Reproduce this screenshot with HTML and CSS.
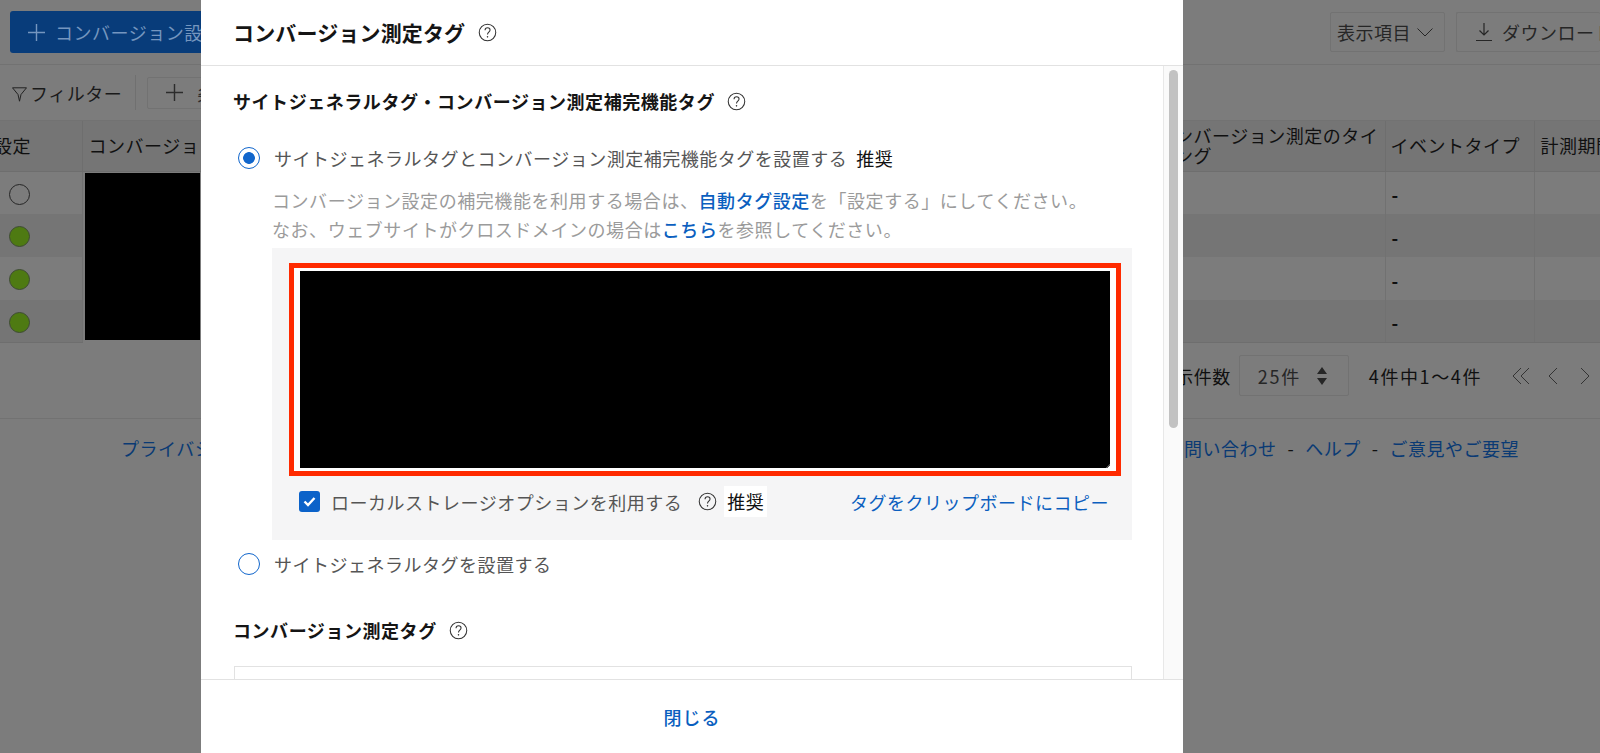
FILE: index.html
```html
<!DOCTYPE html>
<html lang="ja">
<head>
<meta charset="utf-8">
<title>コンバージョン測定タグ</title>
<link rel="stylesheet" href="styles.css">
</head>
<body>
<svg class="sprites" width="0" height="0" aria-hidden="true">
  <symbol id="help" viewBox="0 0 20 20">
    <circle cx="10" cy="10" r="8.7" fill="none" stroke="currentColor" stroke-width="1.1"/>
    <path d="M7.4 7.6c0-1.6 1.2-2.6 2.7-2.6s2.6 1 2.6 2.3c0 2.3-2.7 2.3-2.7 4.7" fill="none" stroke="currentColor" stroke-width="1.1"/>
    <circle cx="10" cy="14.6" r=".8" fill="currentColor"/>
  </symbol>
  <symbol id="plus" viewBox="0 0 18 18">
    <path d="M9 0v18M0 9h18" fill="none" stroke="currentColor" stroke-width="1.5"/>
  </symbol>
</svg>

<div class="page">
  <header class="toolbar">
    <button class="btn-primary"><svg class="ico-plus"><use href="#plus"/></svg>コンバージョン設定</button>
    <div class="toolbar-right">
      <button class="btn-plain">表示項目<svg class="ico-chev" viewBox="0 0 16 9"><path d="M.5.5 8 8 15.5.5" fill="none" stroke="currentColor"/></svg></button>
      <button class="btn-plain btn-download"><svg class="ico-dl" viewBox="0 0 16 20"><path d="M8 1v12M3.5 8.5 8 13l4.500-4.500M0 18.500h16" fill="none" stroke="currentColor" stroke-width="1.200"/></svg>ダウンロード</button>
    </div>
  </header>

  <div class="filterbar">
    <svg class="ico-filter" viewBox="0 0 15 15"><path d="M.5.8h14L9 7.500l-1.500 6.700L6 7.500z" fill="none" stroke="currentColor"/></svg>
    <span class="filter-label">フィルター</span>
    <span class="vsep"></span>
    <button class="btn-add"><svg class="ico-plus"><use href="#plus"/></svg>条件</button>
  </div>

  <table class="grid">
    <colgroup><col class="c1"><col class="c2"><col class="c3"><col class="c4"><col class="c5"><col class="c6"></colgroup>
    <thead>
      <tr>
        <th class="th-clip">設定</th>
        <th>コンバージョン</th>
        <th></th>
        <th>コンバージョン測定のタイミング</th>
        <th>イベントタイプ</th>
        <th>計測期間</th>
      </tr>
    </thead>
    <tbody>
      <tr>
        <td><span class="dot dot-off"></span></td>
        <td class="redact-cell" rowspan="4"><div class="redact"></div></td>
        <td></td><td></td><td class="dash">-</td><td></td>
      </tr>
      <tr class="alt"><td><span class="dot"></span></td><td></td><td></td><td class="dash">-</td><td></td></tr>
      <tr><td><span class="dot"></span></td><td></td><td></td><td class="dash">-</td><td></td></tr>
      <tr class="alt"><td><span class="dot"></span></td><td></td><td></td><td class="dash">-</td><td></td></tr>
    </tbody>
  </table>

  <div class="pager">
    <span>表示件数</span>
    <div class="select"><span class="select-val">25件</span><svg class="ico-sort" viewBox="0 0 12 20"><path d="M6 1l5 7H1zM6 19l5-7H1z" fill="currentColor"/></svg></div>
    <span class="count">4件中1〜4件</span>
    <div class="pager-nav">
      <svg viewBox="0 0 18 18"><path d="M9 1 1 9l8 8M17 1 9 9l8 8" fill="none" stroke="currentColor"/></svg>
      <svg viewBox="0 0 18 18"><path d="M13 1 5 9l8 8" fill="none" stroke="currentColor"/></svg>
      <svg viewBox="0 0 18 18"><path d="M5 1l8 8-8 8" fill="none" stroke="currentColor"/></svg>
    </div>
  </div>

  <footer class="foot">
    <a>プライバシー</a>
    <div class="foot-right"><a>問い合わせ</a><span>-</span><a>ヘルプ</a><span>-</span><a>ご意見やご要望</a></div>
  </footer>
</div>

<section class="modal">
  <div class="modal-head">
    <h1>コンバージョン測定タグ</h1>
    <svg class="help"><use href="#help"/></svg>
  </div>
  <div class="modal-body">
    <div class="modal-content">
      <div class="sec-title"><h2>サイトジェネラルタグ・コンバージョン測定補完機能タグ</h2><svg class="help"><use href="#help"/></svg></div>

      <div class="radio-row first">
        <span class="radio on"></span>
        <span>サイトジェネラルタグとコンバージョン測定補完機能タグを設置する</span>
        <span class="tag">推奨</span>
      </div>
      <p class="desc">コンバージョン設定の補完機能を利用する場合は、<a>自動タグ設定</a>を「設定する」にしてください。<br>なお、ウェブサイトがクロスドメインの場合は<a>こちら</a>を参照してください。</p>

      <div class="tagbox">
        <div class="mark"><div class="redact-code"></div></div>
        <div class="opt-row">
          <span class="check"><svg viewBox="0 0 21 21"><path d="M5.500 10.500 9 14l6.500-7" fill="none" stroke="#fff" stroke-width="2.400"/></svg></span>
          <span class="opt-label">ローカルストレージオプションを利用する</span>
          <svg class="help"><use href="#help"/></svg>
          <span class="tag tag-box">推奨</span>
          <a class="copy">タグをクリップボードにコピー</a>
        </div>
      </div>

      <div class="radio-row second">
        <span class="radio"></span>
        <span>サイトジェネラルタグを設置する</span>
      </div>

      <div class="sec-title sec2"><h2>コンバージョン測定タグ</h2><svg class="help"><use href="#help"/></svg></div>
      <div class="cvbox"></div>
    </div>
    <div class="rail"><div class="thumb"></div></div>
  </div>
  <div class="modal-foot"><a>閉じる</a></div>
</section>
</body>
</html>
```
FILE: styles.css
```css
* { box-sizing: border-box; }
html, body { margin: 0; height: 753px; overflow: hidden; }
body {
  background: #7c7c7c;
  color: #0d0d0d;
  font: 18px/26px "Noto Sans CJK JP", "Noto Sans", sans-serif;
  letter-spacing: .5px;
}
.sprites { position: absolute; }
button { font: inherit; letter-spacing: inherit; cursor: pointer; }
a { color: #0b5fbf; }
h1, h2, p { margin: 0; }

/* dimmed page */
.page { width: 1600px; height: 753px; overflow: hidden; display: flex; flex-direction: column; }
.toolbar {
  height: 65px; flex: none;
  display: flex; align-items: flex-start; justify-content: space-between;
  padding: 11px 0 0 10px;
  border-bottom: 1px solid #727272;
}
.btn-primary {
  width: 300px; height: 42px; flex: none;
  display: flex; align-items: center; gap: 10px;
  padding: 0 0 0 18px;
  border: 0; border-radius: 3px;
  background: #083c7a; color: #7596bf;
  white-space: nowrap;
}
.ico-plus { width: 17px; height: 17px; flex: none; }
.toolbar-right { display: flex; gap: 11px; padding-top: 1px; }
.btn-plain {
  height: 40px;
  display: flex; align-items: center; gap: 6px;
  padding: 0 11px 0 6px;
  border: 1px solid #727272; border-radius: 2px;
  background: #7c7c7c; color: #262626;
  white-space: nowrap;
}
.btn-plain.btn-download { width: 144px; padding-left: 19px; gap: 10px; overflow: hidden; border-right: 0; }
.ico-chev { width: 16px; height: 9px; }
.ico-dl { width: 16px; height: 20px; flex: none; }

.filterbar {
  height: 56px; flex: none;
  display: flex; align-items: center;
  padding-left: 12px;
  border-bottom: 1px solid #727272;
}
.ico-filter { width: 15px; height: 15px; margin-top: 4px; color: #222; }
.filter-label { margin-left: 3px; color: #1a1a1a; }
.vsep { width: 1px; height: 35px; margin-left: 13px; background: #707070; }
.btn-add {
  width: 90px; height: 32px; margin-left: 11px;
  display: flex; align-items: center; gap: 14px;
  padding: 0 0 0 18px;
  border: 1px solid #727272; border-radius: 2px;
  background: #7c7c7c; color: #2c2c2c;
  white-space: nowrap;
}

.grid { width: 1600px; table-layout: fixed; border-collapse: collapse; flex: none; }
.c1 { width: 82px; } .c2 { width: 420px; } .c3 { width: 644px; }
.c4 { width: 239px; } .c5 { width: 149px; } .c6 { width: 66px; }
.grid th {
  height: 50px; padding: 0 8px 2px 6px;
  background: #757575; color: #101010;
  font-weight: 400; font-size: 18px; line-height: 20px; text-align: left;
  border-right: 1px solid #6e6e6e;
  border-bottom: 1px solid #6e6e6e;
  overflow: hidden;
}
.grid th.th-clip { padding: 0 0 2px; text-indent: -6px; }
.grid th:nth-child(4) { padding-left: 10px; padding-right: 4px; }
.grid th:nth-child(5) { padding-left: 5px; }
.grid th:last-child { white-space: nowrap; border-right: 0; }
.grid td { height: 42.5px; padding: 3px 8px 0; border-right: 1px solid #717171; }
.grid td:last-child { border-right: 0; }
.grid tbody tr:last-child td { border-bottom: 1px solid #6e6e6e; }
.grid tr.alt td { background: #757575; }
.grid td.redact-cell { padding: 1px 0 3px 2px; background: #7c7c7c; vertical-align: top; }
.redact { width: 115px; height: 167px; background: #000; }
.grid td.dash { padding-left: 6px; font-weight: 700; }
.dot {
  display: block; width: 21px; height: 21px; margin-left: 1px;
  border-radius: 50%;
  background: #4e7a12; border: 1px solid #3e4c33;
}
.dot-off { background: #7c7c7c; border-color: #262626; }

.pager {
  height: 76px; flex: none;
  display: flex; align-items: center; justify-content: flex-end;
  padding-bottom: 10px;
  border-bottom: 1px solid #727272;
  color: #101010;
  white-space: nowrap;
}
.select {
  width: 110px; height: 41px; margin-left: 8px;
  display: flex; align-items: center; justify-content: space-between;
  padding: 0 20px 0 18px;
  border: 1px solid #727272; border-radius: 2px;
  color: #262626;
}
.select-val { letter-spacing: 1.7px; }
.ico-sort { width: 12px; height: 20px; }
.count { margin-left: 20px; letter-spacing: 1.6px; }
.pager-nav { display: flex; gap: 14px; margin-left: 30px; padding-right: 6px; color: #333; }
.pager-nav svg { width: 18px; height: 18px; }

.foot {
  display: flex; justify-content: space-between;
  padding: 16px 81px 0 121px;
}
.foot a { color: #0a3a74; }
.foot-right { display: flex; gap: 11px; color: #101010; }

/* dialog sits over the page */
.modal {
  position: absolute; left: 201px; top: 0;
  width: 982px; height: 753px;
  display: flex; flex-direction: column;
  background: #fff;
}
.modal-head {
  height: 66px; flex: none;
  display: flex; align-items: center; gap: 13px;
  padding: 0 0 1px 32px;
  border-bottom: 1px solid #e2e2e2;
}
.modal-head h1 { font-size: 21px; line-height: 28px; font-weight: 700; letter-spacing: .15px; color: #151515; }
.help { width: 19px; height: 19px; flex: none; color: #333; }
.modal-body { flex: 1; min-height: 0; display: flex; overflow: hidden; }
.modal-content { flex: 1; min-width: 0; padding: 22px 31px 0 32px; }
.sec-title { display: flex; align-items: center; gap: 12px; }
.sec-title h2 { font-size: 18px; line-height: 26px; font-weight: 700; letter-spacing: .55px; color: #151515; }
.radio-row { display: flex; align-items: center; color: #555; }
.radio-row.first { margin-top: 31px; padding-left: 5px; }
.radio-row.second { margin-top: 11px; padding-left: 5px; }
.radio {
  width: 22px; height: 22px; margin-right: 14px; flex: none;
  border: 1.500px solid #1166cc; border-radius: 50%;
  background: #fff;
}
.radio.on { background: radial-gradient(circle, #1166cc 0 5.500px, #fff 6.200px); }
.tag { margin-left: 9px; color: #111; }
.desc { margin: 15px 0 0 39px; line-height: 29px; letter-spacing: .56px; color: #9b9b9b; }
.desc a { font-weight: 500; }

.tagbox {
  margin: 4px 0 0 39px; height: 292px;
  padding: 15px 11px 0 17px;
  background: #f5f5f6;
}
.mark { border: 5px solid #ff2a00; padding: 3px 6px; background: #fff; }
.redact-code { height: 197px; background: linear-gradient(-45deg, #fff 0 1.500px, #555 1.500px 3px, #000 3px); }
.opt-row { height: 31px; margin-top: 10px; display: flex; align-items: center; padding-left: 10px; color: #555; }
.check { width: 21px; height: 21px; flex: none; margin-right: 11px; border-radius: 3px; background: #0b62c9; }
.check svg { display: block; width: 21px; height: 21px; }
.opt-row .help { margin-left: 16px; }
.tag-box { margin-left: 7px; padding: 0 3px; height: 31px; line-height: 31px; background: #fff; }
.copy { margin-left: auto; padding-right: 12px; }

.sec2 { margin-top: 40px; }
.cvbox { height: 40px; margin: 23px 0 0 1px; border: 1px solid #e2e2e2; }

.rail { width: 20px; flex: none; padding: 4px 5px 0; border-left: 1px solid #e8e8e8; background: #fafafa; }
.thumb { height: 358px; border-radius: 5px; background: #c2c2c2; }
.modal-foot {
  height: 74px; flex: none;
  display: flex; align-items: center; justify-content: center;
  padding: 0;
  border-top: 1px solid #e2e2e2;
  background: #fff;
}
.modal-foot a { font-weight: 500; letter-spacing: 1px; }
```
